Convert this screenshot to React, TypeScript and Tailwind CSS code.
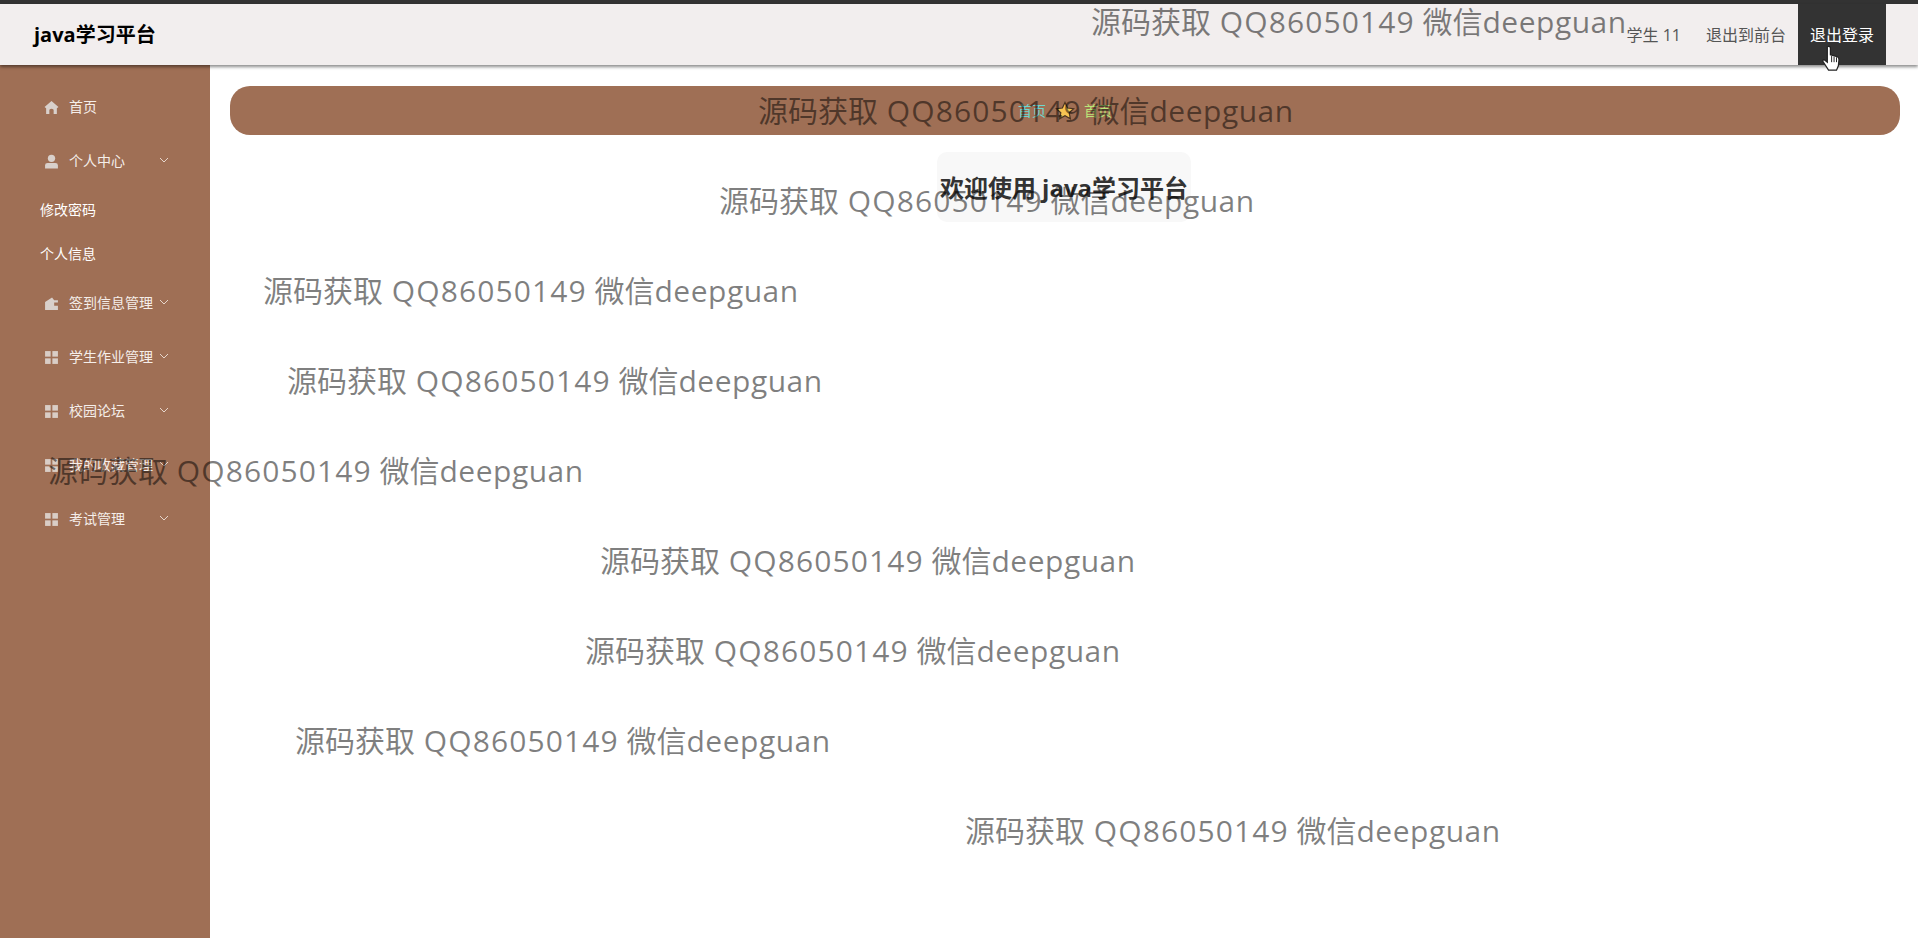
import { ReactNode } from "react";

const font = "font-['Open_Sans','Noto_Sans_CJK_SC',sans-serif]";

const HomeIcon = () => (
  <svg viewBox="0 0 14 14" className="h-[15px] w-[15px] fill-[#d9d0cb]">
    <path d="M7 1 L13.5 6.6 L12 7.6 L12 13 L9 13 L9 9 Q7 7.4 5 9 L5 13 L2 13 L2 7.6 L0.5 6.6 Z" />
  </svg>
);

const UserIcon = () => (
  <svg viewBox="0 0 14 14" className="h-[15px] w-[15px] fill-[#d9d0cb]">
    <circle cx="7" cy="4" r="3.4" />
    <path d="M1 13.5 L1 10.5 Q1 8.4 3.4 8.4 L10.6 8.4 Q13 8.4 13 10.5 L13 13.5 Z" />
  </svg>
);

const WalletIcon = () => (
  <svg viewBox="0 0 14 14" className="h-[15px] w-[15px] fill-[#d9d0cb]">
    <path d="M1 5.5 L7.5 1.5 L9.5 4 L13 4 L13 6 L9.5 6 L9.5 9 L13 9 L13 13 L1 13 Z" />
  </svg>
);

const GridIcon = () => (
  <svg viewBox="0 0 14 14" className="h-[15px] w-[15px] fill-[#d9cdc6]">
    <rect x="1" y="1" width="5.2" height="5.2" />
    <rect x="7.8" y="1" width="5.2" height="5.2" />
    <rect x="1" y="7.8" width="5.2" height="5.2" />
    <rect x="7.8" y="7.8" width="5.2" height="5.2" />
  </svg>
);

const Chevron = () => (
  <svg
    viewBox="0 0 12 12"
    className="h-[12px] w-[12px] fill-none stroke-[#e6d6cc] stroke-1"
  >
    <path d="M2 4 L6 8 L10 4" />
  </svg>
);

const MenuItem = ({
  icon,
  label,
  arrow = true,
}: {
  icon: ReactNode;
  label: string;
  arrow?: boolean;
}) => (
  <div className="relative flex h-[54px] items-center pl-[44px] text-sm text-[#f5eeea]">
    {icon}
    <span className="ml-[10px]">{label}</span>
    {arrow && (
      <span className="absolute left-[158px] top-[20px]">
        <Chevron />
      </span>
    )}
  </div>
);

const SubItem = ({ label }: { label: string }) => (
  <div className="flex h-[44px] items-center pl-[40px] text-sm text-white">
    {label}
  </div>
);

const Sidebar = () => (
  <aside className="w-[210px] shrink-0 bg-[#9f6f55] pt-[15px]">
    <MenuItem icon={<HomeIcon />} label="首页" arrow={false} />
    <MenuItem icon={<UserIcon />} label="个人中心" />
    <SubItem label="修改密码" />
    <SubItem label="个人信息" />
    <MenuItem icon={<WalletIcon />} label="签到信息管理" />
    <MenuItem icon={<GridIcon />} label="学生作业管理" />
    <MenuItem icon={<GridIcon />} label="校园论坛" />
    <MenuItem icon={<GridIcon />} label="我的收藏管理" />
    <MenuItem icon={<GridIcon />} label="考试管理" />
  </aside>
);

const Header = () => (
  <header className="relative z-10 flex h-[61px] items-center bg-[#f2eeee] pl-[34px] pr-[32px] shadow-[0_2px_3px_rgba(0,0,0,0.45)]">
    <div className="text-xl font-bold text-black">java学习平台</div>
    <div className="ml-auto flex h-full items-center text-[#555]">
      <span className="text-base">学生 11</span>
      <span className="ml-[25px] text-base">退出到前台</span>
      <span className="relative ml-[12px] flex h-full w-[88px] items-center justify-center bg-[#333] text-base text-white">
        退出登录
        <svg
          viewBox="0 0 16 22"
          className="absolute left-[23px] top-[41px] h-[27px] w-[20px]"
        >
          <path
            d="M5 1.5 Q6.5 0.5 7.5 2 L7.5 8 L13 9.5 Q14.5 10 14.5 12 L14 17 L12.5 20.5 L6 20.5 L1.5 13.5 Q1 12 2.5 12 L5 14 Z"
            fill="#fff"
            stroke="#222"
            strokeWidth="1"
          />
          <path d="M8.5 9 V14 M10.5 9.5 V14 M12.5 10 V14" stroke="#222" strokeWidth="0.8" />
        </svg>
      </span>
    </div>
  </header>
);

const Breadcrumb = () => (
  <div className="ml-[20px] mr-[18px] mt-[21px] flex h-[49px] items-center justify-center rounded-[20px] bg-[#9f6f55] text-sm">
    <span className="text-[#6fd6cf]">首页</span>
    <svg viewBox="0 0 20 20" className="mx-[9px] h-[20px] w-[20px]">
      <path
        d="M10 1.5 L12.6 7 L18.6 7.7 L14.2 11.8 L15.4 17.8 L10 14.8 L4.6 17.8 L5.8 11.8 L1.4 7.7 L7.4 7 Z"
        fill="#f6c453"
        stroke="#4a3320"
        strokeWidth="1.2"
      />
    </svg>
    <span className="text-[#b9e678]">首页</span>
  </div>
);

const marks: { left: string; top: string }[] = [
  { left: "left-[1091px]", top: "top-[1px]" },
  { left: "left-[758px]", top: "top-[90px]" },
  { left: "left-[719px]", top: "top-[180px]" },
  { left: "left-[263px]", top: "top-[270px]" },
  { left: "left-[287px]", top: "top-[360px]" },
  { left: "left-[48px]", top: "top-[450px]" },
  { left: "left-[600px]", top: "top-[540px]" },
  { left: "left-[585px]", top: "top-[630px]" },
  { left: "left-[295px]", top: "top-[720px]" },
  { left: "left-[965px]", top: "top-[810px]" },
];

const Watermarks = () => (
  <>
    {marks.map((m) => (
      <div
        key={m.top}
        className={`pointer-events-none absolute z-20 whitespace-nowrap text-[30px] leading-[41px] text-black/50 ${m.left} ${m.top}`}
      >
        源码获取 <span className="ml-[1px] tracking-[1.1px]">QQ86050149</span> 微信
        <span className="tracking-[0.5px]">deepguan</span>
      </div>
    ))}
  </>
);

export default function App() {
  return (
    <div
      className={`relative flex h-[938px] flex-col overflow-hidden bg-white ${font}`}
    >
      <div className="h-[4px] shrink-0 bg-[#333]" />
      <Header />
      <div className="flex flex-1">
        <Sidebar />
        <main className="flex-1">
          <Breadcrumb />
          <div className="mx-auto mt-[17px] flex h-[70px] w-[254px] items-center justify-center rounded-[10px] bg-[#f8f8f8] pt-[2px] text-2xl font-bold whitespace-nowrap text-[#333]">
            欢迎使用 java学习平台
          </div>
        </main>
      </div>
      <Watermarks />
    </div>
  );
}
